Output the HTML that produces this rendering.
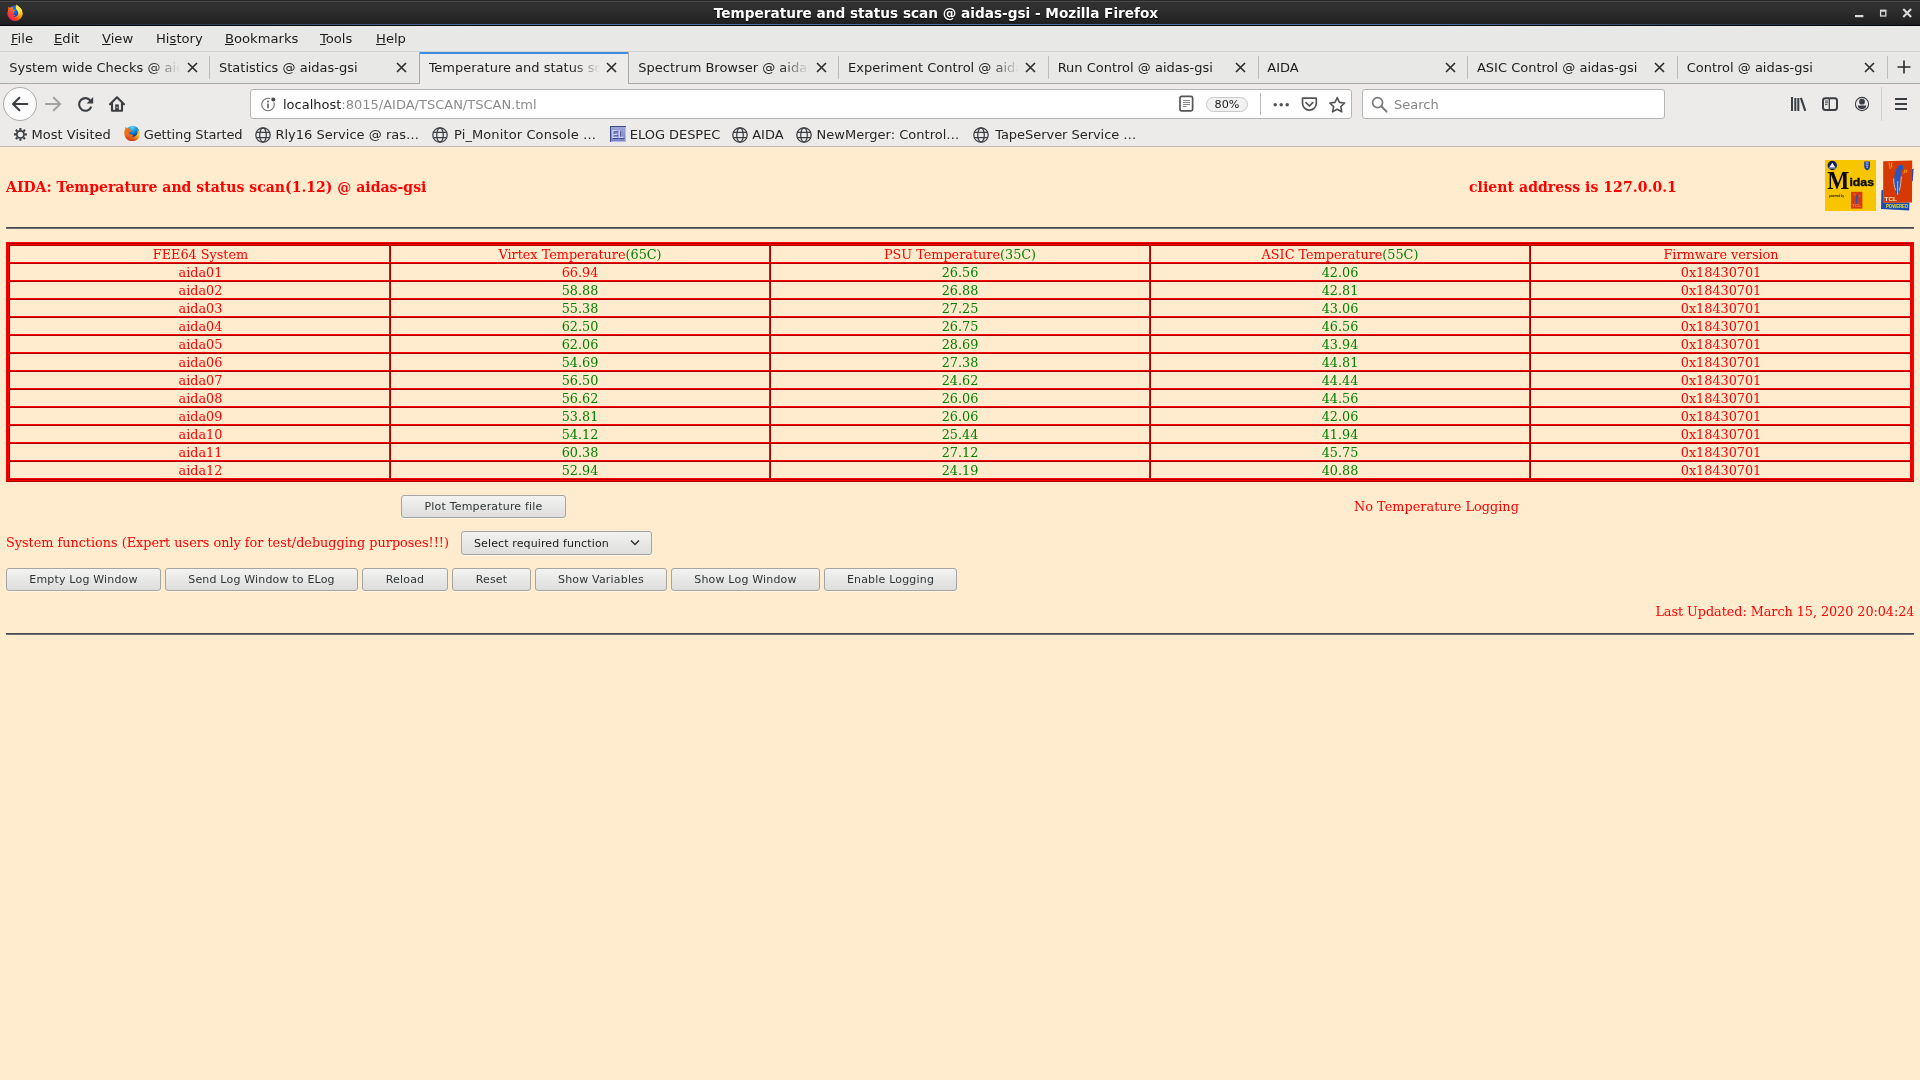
<!DOCTYPE html>
<html lang="en">
<head>
<meta charset="utf-8">
<title>Temperature and status scan @ aidas-gsi - Mozilla Firefox</title>
<style>
*{box-sizing:border-box;}
html,body{margin:0;padding:0;width:1920px;height:1080px;overflow:hidden;background:#ffebcd;}
body{font-family:"DejaVu Sans","Liberation Sans",sans-serif;font-size:13px;color:#1a1a1a;position:relative;}
.abs{position:absolute;}
#titlebar,#menubar,#tabs,#nav,#bm,#page{will-change:transform;}
/* ---------- window title bar ---------- */
#titlebar{left:0;top:0;width:1920px;height:26px;background:linear-gradient(#2a2a2a 0,#2a2a2a 1px,#474747 1px,#474747 2px,#313131 2px,#2d2d2d 12px,#1f1f1f 24px,#060606 25px,#060606 26px);color:#fff;}
#titlebar:after{content:"";position:absolute;left:0;top:24px;width:1920px;height:1px;background:linear-gradient(to right,rgba(70,106,156,0.1),rgba(80,118,170,0.95) 25%,rgba(80,118,170,0.95) 75%,rgba(70,106,156,0.1));}
#titlebar .ttl{left:0;top:0;width:1872px;height:26px;line-height:27px;text-align:center;font-weight:bold;font-size:13.64px;white-space:nowrap;text-shadow:0 1px 1px rgba(0,0,0,0.9);}
/* ---------- menu bar ---------- */
#menubar{left:0;top:26px;width:1920px;height:26px;background:#e8e8e7;border-bottom:1px solid #d2d2d1;}
#menubar span{position:absolute;top:0;line-height:26px;font-size:13.13px;color:#1c1c1c;white-space:nowrap;}
#menubar u{text-decoration:underline;text-underline-offset:1px;}
/* ---------- tabs ---------- */
#tabs{left:0;top:52px;width:1920px;height:32px;background:#e8e8e7;border-bottom:1px solid #a9a9a9;}
.tab{position:absolute;top:0;height:31px;width:210px;}
.tab .lbl{position:absolute;left:9.3px;top:0;width:172px;line-height:32px;font-size:13px;white-space:nowrap;overflow:hidden;color:#1c1c1c;}
.tab .fade{position:absolute;left:150px;top:3px;width:31px;height:24px;background:linear-gradient(to right,rgba(232,232,231,0),#e8e8e7);}
.tab.act .fade{background:linear-gradient(to right,rgba(236,235,234,0),#ecebea);}
.tab .lbl.ov{-webkit-mask-image:linear-gradient(to right,#000 143px,transparent 171px);mask-image:linear-gradient(to right,#000 143px,transparent 171px);}
.tab .sep{position:absolute;left:0;top:4px;width:1px;height:23px;background:#bdbdbc;}
.tab svg.x{position:absolute;left:187px;top:10px;}
.tab.act{background:#ecebea;border-left:1px solid #a9a9a9;border-right:1px solid #a9a9a9;height:32px;}
.tab.act svg.x{left:185.5px;}
.tab.act .fade{left:149px;}
.tab.act:before{content:"";position:absolute;left:0;right:0;top:0;height:2px;background:#3d8ee0;}
/* ---------- nav bar ---------- */
#nav{left:0;top:84px;width:1920px;height:40px;background:#ecebea;}
#urlbar{left:250px;top:5px;width:1102px;height:30px;background:#fff;border:1px solid #b5b5b4;border-radius:3px;}
#searchbar{left:1362px;top:5px;width:303px;height:30px;background:#fff;border:1px solid #b5b5b4;border-radius:3px;}
/* ---------- bookmarks ---------- */
#bm{left:0;top:124px;width:1920px;height:23px;background:#ecebea;border-bottom:1px solid #b8b8b7;}
#bm span.t{position:absolute;top:0;line-height:21px;font-size:13px;color:#262626;white-space:nowrap;}
/* ---------- page ---------- */
#page{left:0;top:147px;width:1920px;height:933px;background:#ffebcd;font-family:"DejaVu Serif","Liberation Serif",serif;font-size:12.8px;color:#ff0000;}

.h3{font-weight:bold;font-size:14px;line-height:18px;white-space:nowrap;}
.hr{left:6px;width:1908px;height:2px;border-top:1px solid #484a4e;border-bottom:1px solid #6a6e75;}
.g{color:#008000;}
.b1{border:1px solid #ff0000;border-bottom-color:#b20000;}
.b2{border:1px solid #b20000;border-right-color:#ff0000;border-bottom-color:#ff0000;height:100%;}
.b3{border:1px solid #ff0000;border-bottom-color:#b20000;border-right-color:#b20000;height:100%;}
table{border-collapse:separate;border-spacing:0;table-layout:fixed;width:1902px;font-size:12.8px;}
td{height:18px;border:1px solid;border-color:#b20000 #ff0000 #ff0000 #b20000;text-align:center;line-height:15px;padding:1px 0 0 0;vertical-align:top;white-space:nowrap;}
td:first-child{padding-left:2px;}
td:last-child{padding-left:1px;}
.btn{height:23px;border:1px solid #a5a5a3;border-radius:3px;background:linear-gradient(#f3f3f2,#dddddb);font-family:"DejaVu Sans","Liberation Sans",sans-serif;font-size:11px;letter-spacing:0.18px;line-height:21px;text-align:center;color:#2e3436;white-space:nowrap;box-shadow:0 1px 0 rgba(255,255,255,0.5);}
.sel{text-align:left;padding-left:12px;height:24px;line-height:23px;color:#1a1a1a;letter-spacing:0.12px;background:linear-gradient(#f2f2f1,#dededc);}
</style>
</head>
<body>
<div id="titlebar" class="abs"><div class="ttl abs">Temperature and status scan @ aidas-gsi - Mozilla Firefox</div>
<svg class="abs" style="left:6px;top:4px" width="18" height="18" viewBox="0 0 18 18"><defs><linearGradient id="q1" x1="0.85" y1="0.1" x2="0.15" y2="0.9"><stop offset="0" stop-color="#fff44f"/><stop offset="0.3" stop-color="#ffbd1a"/><stop offset="0.6" stop-color="#ff6a1a"/><stop offset="0.85" stop-color="#ff2a3a"/><stop offset="1" stop-color="#d4109a"/></linearGradient><linearGradient id="q3" x1="0.6" y1="0" x2="0.2" y2="1"><stop offset="0" stop-color="#ff8a1a"/><stop offset="0.55" stop-color="#ff4a2a"/><stop offset="1" stop-color="#f0207a"/></linearGradient><radialGradient id="q2" cx="0.55" cy="0.35" r="0.7"><stop offset="0" stop-color="#0a84ff"/><stop offset="0.7" stop-color="#0a50e0"/><stop offset="1" stop-color="#1a20a8"/></radialGradient></defs>
<circle cx="9" cy="9.4" r="7.7" fill="url(#q1)"/>
<path d="M4 3.6C5.6 2 8 1.6 10 2C9.6 3.4 9.8 4.6 10.6 5.6C11.8 7 12.8 8.4 12 10.4C11.2 12.4 8.6 13 6.6 12.6C8 12.4 9.2 11.8 9.6 10.8C8.4 11.2 7.2 11 6.4 10.2C7.2 10 7.8 9.4 8.2 8.8C8.6 8 8 7.2 7.2 7.2C7.8 6.6 8.6 6.4 9.2 6.6C8.6 5.8 7.6 5.6 6.8 5.8C6.6 5 6.8 4.2 7.2 3.6C6 3.6 5 4 4 3.6Z" fill="url(#q2)"/>
<path d="M10.4 0.4C12 1.6 15.4 4.2 16.4 7.6C15.6 6.6 14.8 6.2 14.2 6.2C14.6 8.2 14 10 12.4 11C13 9.4 12.6 7.6 11.4 6.4C10.2 5.2 9.6 3.6 10 2.2C10 1.6 10.2 1 10.4 0.4Z" fill="#ffe83e"/>
<path d="M2.4 2.6C3 3.4 3.8 3.8 4.8 3.8C5.6 3.6 6.4 3.4 7.2 3.6C6.8 4.4 6.6 5.2 6.8 5.8C7.6 5.6 8.6 5.8 9.2 6.6C8.4 6.6 7.6 6.8 7.2 7.4C7.8 7.4 8.4 8 8.2 8.8C7.6 9.6 6.4 10 5.4 9.6C5.8 10.6 6.8 11.4 8 11.4C6.6 12.2 4.6 11.8 3.6 10.4C2.4 8.8 2 6.6 2.2 4.8C2.2 4 2.2 3.2 2.4 2.6Z" fill="url(#q3)" opacity="0.95"/>
</svg>
<svg class="abs" style="left:1850px;top:6px" width="66" height="14" viewBox="0 0 66 14"><rect x="5" y="9" width="8.4" height="2.2" fill="#dadada"/><rect x="30.6" y="5" width="5.2" height="5" fill="none" stroke="#dadada" stroke-width="1.3"/><rect x="30" y="3.6" width="6.4" height="1.6" fill="#dadada"/><path d="M54 3.8L60.4 10.2M60.4 3.8L54 10.2" stroke="#dadada" stroke-width="2.1" stroke-linecap="square"/></svg>
</div>
<div id="menubar" class="abs">
<span style="left:11px"><u>F</u>ile</span>
<span style="left:54px"><u>E</u>dit</span>
<span style="left:102px"><u>V</u>iew</span>
<span style="left:156px">Hi<u>s</u>tory</span>
<span style="left:225px"><u>B</u>ookmarks</span>
<span style="left:320px"><u>T</u>ools</span>
<span style="left:376px"><u>H</u>elp</span>
</div>
<div id="tabs" class="abs">
<div class="tab" style="left:0px"><div class="lbl ov" style="left:9.30px">System wide Checks @ aidas-gsi</div><svg class="x" width="11" height="11" viewBox="0 0 11 11"><path d="M1 1 L10 10 M10 1 L1 10" stroke="#2b2b2b" stroke-width="1.6" fill="none"/></svg></div>
<div class="tab" style="left:209px"><div class="sep"></div><div class="lbl" style="left:9.97px">Statistics @ aidas-gsi</div><svg class="x" width="11" height="11" viewBox="0 0 11 11"><path d="M1 1 L10 10 M10 1 L1 10" stroke="#2b2b2b" stroke-width="1.6" fill="none"/></svg></div>
<div class="tab act" style="left:419px"><div class="lbl ov" style="left:8.63px">Temperature and status scan @ aidas-gsi</div><svg class="x" width="11" height="11" viewBox="0 0 11 11"><path d="M1 1 L10 10 M10 1 L1 10" stroke="#2b2b2b" stroke-width="1.6" fill="none"/></svg></div>
<div class="tab" style="left:629px"><div class="lbl ov" style="left:9.30px">Spectrum Browser @ aidas-gsi</div><svg class="x" width="11" height="11" viewBox="0 0 11 11"><path d="M1 1 L10 10 M10 1 L1 10" stroke="#2b2b2b" stroke-width="1.6" fill="none"/></svg></div>
<div class="tab" style="left:838px"><div class="sep"></div><div class="lbl ov" style="left:9.97px">Experiment Control @ aidas-gsi</div><svg class="x" width="11" height="11" viewBox="0 0 11 11"><path d="M1 1 L10 10 M10 1 L1 10" stroke="#2b2b2b" stroke-width="1.6" fill="none"/></svg></div>
<div class="tab" style="left:1048px"><div class="sep"></div><div class="lbl" style="left:9.63px">Run Control @ aidas-gsi</div><svg class="x" width="11" height="11" viewBox="0 0 11 11"><path d="M1 1 L10 10 M10 1 L1 10" stroke="#2b2b2b" stroke-width="1.6" fill="none"/></svg></div>
<div class="tab" style="left:1258px"><div class="sep"></div><div class="lbl" style="left:9.30px">AIDA</div><svg class="x" width="11" height="11" viewBox="0 0 11 11"><path d="M1 1 L10 10 M10 1 L1 10" stroke="#2b2b2b" stroke-width="1.6" fill="none"/></svg></div>
<div class="tab" style="left:1467px"><div class="sep"></div><div class="lbl" style="left:9.97px">ASIC Control @ aidas-gsi</div><svg class="x" width="11" height="11" viewBox="0 0 11 11"><path d="M1 1 L10 10 M10 1 L1 10" stroke="#2b2b2b" stroke-width="1.6" fill="none"/></svg></div>
<div class="tab" style="left:1677px"><div class="sep"></div><div class="lbl" style="left:9.63px">Control @ aidas-gsi</div><svg class="x" width="11" height="11" viewBox="0 0 11 11"><path d="M1 1 L10 10 M10 1 L1 10" stroke="#2b2b2b" stroke-width="1.6" fill="none"/></svg></div>
<div class="tab" style="left:1887px;width:33px"><div class="sep"></div><svg style="position:absolute;left:10px;top:8px" width="14" height="14" viewBox="0 0 14 14"><path d="M7 0.5V13.5M0.5 7H13.5" stroke="#2b2b2b" stroke-width="1.6" fill="none"/></svg></div>
</div>
<div id="nav" class="abs">
<div class="abs" style="left:3px;top:3px;width:34px;height:34px;border-radius:17px;background:#fcfcfc;border:1px solid #a9a9a8;"></div>
<svg class="abs" style="left:0;top:0" width="140" height="40" viewBox="0 0 140 40">
<g fill="none" stroke="#3b3f44" stroke-width="2.1" stroke-linecap="round" stroke-linejoin="round">
<path d="M27.3 20H13.2M19.4 13.8L13 20L19.4 26.2"/>
<path d="M45.9 20H60M53.8 13.8L60.2 20L53.8 26.2" stroke="#a3a3a3"/>
<path d="M90.6 16.9A6.3 6.3 0 1 0 91.3 22.6" stroke-linecap="butt"/>
<path d="M110 20.3L117 13.3L124 20.3M112 19.5V26.8H122V19.5"/>
</g>
<path d="M93.2 13V19.4H86.6Z" fill="#3b3f44"/>
<rect x="115.2" y="20.4" width="3.6" height="6" fill="#3b3f44"/>
<rect x="116.5" y="22.8" width="1" height="1.3" fill="#ececeb"/>
</svg>
<div id="urlbar" class="abs">
<svg class="abs" style="left:9px;top:4.5px" width="18" height="18" viewBox="0 0 18 18"><circle cx="8" cy="9.5" r="6.3" fill="none" stroke="#6d6d6d" stroke-width="1.1"/><circle cx="13.3" cy="4.3" r="3.1" fill="#fff"/><circle cx="13.3" cy="4.4" r="2" fill="#4a4a4a"/><rect x="7.2" y="8.6" width="1.6" height="4.6" fill="#5a5a5a"/><circle cx="8" cy="6.6" r="1" fill="#5a5a5a"/></svg>
<div class="abs" id="urltxt" style="left:32px;top:0;line-height:30px;font-size:13px;white-space:nowrap;color:#8c8c8c"><span style="color:#1a1a1a">localhost</span>:8015/AIDA/TSCAN/TSCAN.tml</div>
<svg class="abs" style="left:927px;top:5.3px" width="18" height="18" viewBox="0 0 18 18"><rect x="2" y="1.3" width="12.6" height="14.6" rx="1.6" fill="none" stroke="#555" stroke-width="1.7"/><path d="M5 5.5H12M5 7.5H12M5 9.5H12M5 11.5H8.5" stroke="#666" stroke-width="0.8"/></svg>
<div class="abs" style="left:955px;top:7px;width:42px;height:15px;border:1px solid #c9c9c9;border-radius:8px;background:#f1f1f1;font-size:11.2px;line-height:13px;text-align:center;color:#1a1a1a">80%</div>
<div class="abs" style="left:1009px;top:3px;width:1px;height:22px;background:#b9b9b9"></div>
<svg class="abs" style="left:1019px;top:4.5px" width="80" height="20" viewBox="0 0 80 20"><g fill="#555"><circle cx="5.2" cy="9.8" r="1.75"/><circle cx="11.2" cy="9.8" r="1.75"/><circle cx="17.2" cy="9.8" r="1.75"/></g>
<path d="M32.5 3.2H46.3V8.3A6.9 6.9 0 0 1 32.5 8.3Z" fill="none" stroke="#555" stroke-width="1.7" stroke-linejoin="round"/><path d="M36 7.6L39.4 11L42.8 7.6" fill="none" stroke="#555" stroke-width="1.7" stroke-linecap="round" stroke-linejoin="round"/>
<path d="M67.2 2.6L69.4 7.4L74.6 8L70.8 11.6L71.8 16.8L67.2 14.2L62.6 16.8L63.6 11.6L59.8 8L65 7.4Z" fill="none" stroke="#555" stroke-width="1.6" stroke-linejoin="round"/></svg>
</div>
<div id="searchbar" class="abs">
<svg class="abs" style="left:7px;top:5px" width="20" height="20" viewBox="0 0 20 20"><circle cx="7.6" cy="7.6" r="5" fill="none" stroke="#7b7b7b" stroke-width="1.7"/><path d="M11.3 11.3L16.6 16.6" stroke="#7b7b7b" stroke-width="2" stroke-linecap="round"/></svg>
<div class="abs" style="left:31px;top:0;line-height:30px;font-size:13px;color:#858585">Search</div>
</div>
<svg class="abs" style="left:1785px;top:8px" width="130" height="24" viewBox="0 0 130 24">
<g fill="#3b3f44"><rect x="6" y="5" width="2" height="14"/><rect x="9.3" y="6" width="2" height="13"/><rect x="12.3" y="6" width="2" height="13"/><path d="M14.9 6.3L16.9 5.6L21.3 18.6L19.3 19.3Z"/>
<circle cx="77" cy="9.7" r="2.9"/><path d="M72.8 13.6H81.2A4.2 3.6 0 0 1 72.8 13.6Z"/>
<rect x="110" y="6" width="12" height="2"/><rect x="110" y="11" width="12" height="2"/><rect x="110" y="16" width="12" height="2"/></g>
<rect x="38" y="6.2" width="14" height="11.8" rx="2.4" fill="none" stroke="#3b3f44" stroke-width="2"/><path d="M44.3 6.2V18" stroke="#3b3f44" stroke-width="1.3"/><path d="M40 9H43M40 10.8H43M40 12.6H42.4" stroke="#3b3f44" stroke-width="0.9"/>
<circle cx="77" cy="12" r="6.6" fill="none" stroke="#3b3f44" stroke-width="1.1"/>
</svg>
<div class="abs" style="left:1881px;top:3px;width:1px;height:34px;background:#cfcfce"></div>
</div>
<div id="bm" class="abs">
<svg class="abs" style="left:12.6px;top:2.6px" width="14.8" height="14.8" viewBox="0 0 16 16"><g stroke="#3b3f44" fill="none"><circle cx="8" cy="8" r="3.9" stroke-width="1.9"/><g stroke-width="2.3"><path d="M8 1V3.4M8 12.6V15M1 8H3.4M12.6 8H15M3.05 3.05L4.75 4.75M11.25 11.25L12.95 12.95M3.05 12.95L4.75 11.25M11.25 4.75L12.95 3.05"/></g></g></svg>
<span class="t" style="left:31.60px;letter-spacing:0.009px">Most Visited</span>
<svg class="abs" style="left:124px;top:0.9px" width="16.4" height="16.4" viewBox="0 0 16 16"><defs><radialGradient id="fb" cx="0.45" cy="0.1" r="0.95"><stop offset="0" stop-color="#6fd0f7"/><stop offset="0.35" stop-color="#12a0e2"/><stop offset="0.65" stop-color="#0b55b0"/><stop offset="0.9" stop-color="#08206a"/></radialGradient><linearGradient id="fg" x1="0" y1="0.2" x2="1" y2="0.6"><stop offset="0" stop-color="#f07a1c"/><stop offset="0.35" stop-color="#ea6a20"/><stop offset="0.7" stop-color="#f3921c"/><stop offset="0.88" stop-color="#ffd21e"/><stop offset="1" stop-color="#fff08a"/></linearGradient><linearGradient id="fs" x1="0" y1="0" x2="0" y2="1"><stop offset="0.55" stop-color="#c8200f" stop-opacity="0"/><stop offset="1" stop-color="#c01a10" stop-opacity="0.75"/></linearGradient></defs>
<circle cx="8.4" cy="7" r="6.3" fill="url(#fb)"/>
<path id="fxp" d="M1.4 1.6C2 2.6 2.8 3.2 3.6 3.4C4.4 2.8 5.4 2.6 6.2 2.8C5.8 3.4 5.8 4.2 6.2 4.8C6.8 4.9 7.4 5.1 7.8 5.4C7.2 5.6 6.8 6 6.6 6.5C6 6.7 5.2 7.2 4.6 7.8C5.2 8 5.6 8.4 5.8 8.9C6.6 9.6 7.8 9.8 9 9.4C8.8 10.2 8.2 10.9 7.4 11.3C9.2 12 11.4 11.2 12.4 9.6C13.4 8 13.4 5.8 12.6 4.2C13.8 4.8 14.6 5.8 15 6.8C15.2 5.8 15.1 5 14.8 4.2C16.2 6.2 16.4 9 15.2 11.4C13.8 14.4 10.6 16.2 7.2 15.8C3.8 15.4 1 12.8 0.4 9.4C0 7.2 0.4 5.2 1.2 3.6C1.2 3 1.2 2.2 1.4 1.6Z" fill="url(#fg)"/>
<path d="M1.4 1.6C2 2.6 2.8 3.2 3.6 3.4C4.4 2.8 5.4 2.6 6.2 2.8C5.8 3.4 5.8 4.2 6.2 4.8C6.8 4.9 7.4 5.1 7.8 5.4C7.2 5.6 6.8 6 6.6 6.5C6 6.7 5.2 7.2 4.6 7.8C5.2 8 5.6 8.4 5.8 8.9C6.6 9.6 7.8 9.8 9 9.4C8.8 10.2 8.2 10.9 7.4 11.3C9.2 12 11.4 11.2 12.4 9.6C13.4 8 13.4 5.8 12.6 4.2C13.8 4.8 14.6 5.8 15 6.8C15.2 5.8 15.1 5 14.8 4.2C16.2 6.2 16.4 9 15.2 11.4C13.8 14.4 10.6 16.2 7.2 15.8C3.8 15.4 1 12.8 0.4 9.4C0 7.2 0.4 5.2 1.2 3.6C1.2 3 1.2 2.2 1.4 1.6Z" fill="url(#fs)"/>
</svg>
<span class="t" style="left:143.80px;letter-spacing:-0.123px">Getting Started</span>
<svg class="abs" style="left:254px;top:2px" width="18" height="18" viewBox="0 0 18 18"><g fill="none" stroke="#3b3f44" stroke-width="1.25"><circle cx="9" cy="9" r="7.2"/><ellipse cx="9" cy="9" rx="3.3" ry="7.2"/><path d="M2.4 6.4H15.6M2.4 11.6H15.6"/></g></svg>
<span class="t" style="left:275.40px;letter-spacing:0.014px">Rly16 Service @ ras…</span>
<svg class="abs" style="left:431px;top:2px" width="18" height="18" viewBox="0 0 18 18"><g fill="none" stroke="#3b3f44" stroke-width="1.25"><circle cx="9" cy="9" r="7.2"/><ellipse cx="9" cy="9" rx="3.3" ry="7.2"/><path d="M2.4 6.4H15.6M2.4 11.6H15.6"/></g></svg>
<span class="t" style="left:454.00px;letter-spacing:0.107px">Pi_Monitor Console …</span>
<svg class="abs" style="left:610px;top:2px" width="17" height="17" viewBox="0 0 17 17"><defs><linearGradient id="elg" x1="0" y1="0" x2="0" y2="1"><stop offset="0" stop-color="#a0a5dc"/><stop offset="1" stop-color="#7d84c0"/></linearGradient></defs><rect x="0" y="0" width="16" height="16" fill="url(#elg)"/><rect x="15" y="1" width="1" height="15" fill="#b4b8f0"/><rect x="1" y="15" width="15" height="1" fill="#aeb2ea"/><rect x="0" y="0" width="16" height="1" fill="#3e4a85"/><rect x="0" y="0" width="1" height="16" fill="#3e4a85"/><text transform="translate(2.3,12.6) scale(0.84,1)" font-family="'Liberation Sans','DejaVu Sans',sans-serif" font-weight="bold" font-size="11.5" fill="#3e4a85">EL</text><text transform="translate(1.6,12) scale(0.84,1)" font-family="'Liberation Sans','DejaVu Sans',sans-serif" font-weight="bold" font-size="11.5" fill="#cbcdff">EL</text></svg>
<span class="t" style="left:629.80px;letter-spacing:-0.045px">ELOG DESPEC</span>
<svg class="abs" style="left:731px;top:2px" width="18" height="18" viewBox="0 0 18 18"><g fill="none" stroke="#3b3f44" stroke-width="1.25"><circle cx="9" cy="9" r="7.2"/><ellipse cx="9" cy="9" rx="3.3" ry="7.2"/><path d="M2.4 6.4H15.6M2.4 11.6H15.6"/></g></svg>
<span class="t" style="left:752.2px;letter-spacing:0.026px">AIDA</span>
<svg class="abs" style="left:795px;top:2px" width="18" height="18" viewBox="0 0 18 18"><g fill="none" stroke="#3b3f44" stroke-width="1.25"><circle cx="9" cy="9" r="7.2"/><ellipse cx="9" cy="9" rx="3.3" ry="7.2"/><path d="M2.4 6.4H15.6M2.4 11.6H15.6"/></g></svg>
<span class="t" style="left:816.60px;letter-spacing:0.008px">NewMerger: Control…</span>
<svg class="abs" style="left:972px;top:2px" width="18" height="18" viewBox="0 0 18 18"><g fill="none" stroke="#3b3f44" stroke-width="1.25"><circle cx="9" cy="9" r="7.2"/><ellipse cx="9" cy="9" rx="3.3" ry="7.2"/><path d="M2.4 6.4H15.6M2.4 11.6H15.6"/></g></svg>
<span class="t" style="left:995.20px;letter-spacing:-0.043px">TapeServer Service …</span>
</div>
<div id="page" class="abs">
<div class="abs h3" style="left:6px;top:31px;letter-spacing:0.02px">AIDA: Temperature and status scan(1.12) @ aidas-gsi</div>
<div class="abs h3" style="left:1469px;top:31px;letter-spacing:0.06px">client address is 127.0.0.1</div>
<svg class="abs" id="midas" style="left:1825px;top:13px" width="51" height="51" viewBox="0 0 51 51">
<rect width="51" height="51" fill="#f7c600"/>
<circle cx="7.3" cy="5.5" r="4.7" fill="#14205a"/><path d="M4.2 7.6L7.3 2.8L10.4 7.6Z" fill="#f4f6fb"/><path d="M3.4 8.2H11.2" stroke="#9fb0d8" stroke-width="0.8"/>
<path d="M39.2 1.4H45V6.4C45 8.4 43.6 9.6 42.1 10.4C40.6 9.6 39.2 8.4 39.2 6.4Z" fill="#1d3f9e"/><path d="M40.6 3H43.6M40.8 5.2H43.4M41.2 7.2H43" stroke="#dfe6fa" stroke-width="0.9"/>
<text x="2.2" y="28.6" font-family="'Liberation Serif','DejaVu Serif',serif" font-weight="bold" font-size="25" fill="#0a0a0a" textLength="22" lengthAdjust="spacingAndGlyphs">M</text>
<text x="24.4" y="26" font-family="'Liberation Sans','DejaVu Sans',sans-serif" font-weight="bold" font-size="11" fill="#0a0a0a" stroke="#0a0a0a" stroke-width="0.35" textLength="24.6" lengthAdjust="spacingAndGlyphs">idas</text>
<text x="4" y="37" font-family="'Liberation Sans','DejaVu Sans',sans-serif" font-weight="bold" font-size="3.4" fill="#1a1400" textLength="15" lengthAdjust="spacingAndGlyphs">powered by</text>
<rect x="26" y="31.8" width="11.4" height="16.8" fill="#d63a12"/>
<path d="M32.6 34.2C33.8 34.6 33.6 36.4 32.8 38.4C32.2 40.4 32.4 42.6 31.6 44.4C30.6 42.6 30.4 40 30.8 38C31.2 36.2 31.6 34.8 32.6 34.2Z" fill="#2a56b8"/>
<path d="M29.2 33.4L30 35.6M34.6 35.4L34 37" stroke="#f6a800" stroke-width="0.7"/>
<text x="27" y="47" font-family="'Liberation Sans',sans-serif" font-weight="bold" font-size="2.6" fill="#f08a3a" textLength="9" lengthAdjust="spacingAndGlyphs">TCL</text>
</svg>
<svg class="abs" id="tcl" style="left:1880px;top:12px" width="36" height="54" viewBox="0 0 36 54">
<path d="M1.4 31.4L3.4 30.4V43.4H29.4L29.2 51.6L1 50Z" fill="#1b4db3"/>
<path d="M31.6 10.4L33.6 9.6L32.8 22L31.6 22.6Z" fill="#1b4db3"/>
<path d="M3.2 2.2L32.2 1.6L32 43.6L3.2 43.8Z" fill="#d63a02"/>
<path d="M20.8 5.4C23.6 5.6 23.4 8.6 22.4 11L20.4 11.6C21.6 13.6 20.6 18 20.4 22C20.2 26 19.8 30 18.8 33C18.4 35 18 36.6 17.4 38C16.6 34 15 31 14.4 26.6C13.8 21.6 14.2 15.6 16 11C17 8.4 18.6 6 20.8 5.4Z" fill="#2358c4"/>
<path d="M13.8 19.4C13.4 23.6 14.4 28 15.8 31.4M21.4 17.4C20.8 22 20.6 27 19.4 31.6M17.6 22V36" stroke="#f2e6d8" stroke-width="0.7" fill="none"/>
<path d="M9 3.6C9.6 5.6 10 7.6 10.2 9.8M11.8 3.4C11.6 5 11.4 6.6 11.6 8.4M25 10.6C24.6 12 24.2 13.2 23.8 14.4M27 10.8C26.6 12 26.2 13 25.8 14" stroke="#f6b800" stroke-width="0.9" fill="none"/>
<text x="4.6" y="42" font-family="'Liberation Sans','DejaVu Sans',sans-serif" font-weight="bold" font-size="5.2" fill="#fbeee0" textLength="12.4" lengthAdjust="spacingAndGlyphs">TCL</text>
<text x="6" y="49.3" font-family="'Liberation Sans','DejaVu Sans',sans-serif" font-weight="bold" font-size="5.2" fill="#f2e11c" textLength="22" lengthAdjust="spacingAndGlyphs">POWERED</text>
</svg>
<div class="abs hr" style="top:80px"></div>
<div class="abs b1" style="left:6px;top:95px;width:1908px;height:240px"><div class="b2"><div class="b3">
<table cellspacing="0" cellpadding="0">
<colgroup><col style="width:381px"><col style="width:380px"><col style="width:380px"><col style="width:380px"><col style="width:381px"></colgroup>
<tr><td>FEE64 System</td><td>Virtex Temperature<span class="g">(65C)</span></td><td>PSU Temperature<span class="g">(35C)</span></td><td>ASIC Temperature<span class="g">(55C)</span></td><td>Firmware version</td></tr>
<tr><td>aida01</td><td>66.94</td><td class="g">26.56</td><td class="g">42.06</td><td>0x18430701</td></tr>
<tr><td>aida02</td><td class="g">58.88</td><td class="g">26.88</td><td class="g">42.81</td><td>0x18430701</td></tr>
<tr><td>aida03</td><td class="g">55.38</td><td class="g">27.25</td><td class="g">43.06</td><td>0x18430701</td></tr>
<tr><td>aida04</td><td class="g">62.50</td><td class="g">26.75</td><td class="g">46.56</td><td>0x18430701</td></tr>
<tr><td>aida05</td><td class="g">62.06</td><td class="g">28.69</td><td class="g">43.94</td><td>0x18430701</td></tr>
<tr><td>aida06</td><td class="g">54.69</td><td class="g">27.38</td><td class="g">44.81</td><td>0x18430701</td></tr>
<tr><td>aida07</td><td class="g">56.50</td><td class="g">24.62</td><td class="g">44.44</td><td>0x18430701</td></tr>
<tr><td>aida08</td><td class="g">56.62</td><td class="g">26.06</td><td class="g">44.56</td><td>0x18430701</td></tr>
<tr><td>aida09</td><td class="g">53.81</td><td class="g">26.06</td><td class="g">42.06</td><td>0x18430701</td></tr>
<tr><td>aida10</td><td class="g">54.12</td><td class="g">25.44</td><td class="g">41.94</td><td>0x18430701</td></tr>
<tr><td>aida11</td><td class="g">60.38</td><td class="g">27.12</td><td class="g">45.75</td><td>0x18430701</td></tr>
<tr><td>aida12</td><td class="g">52.94</td><td class="g">24.19</td><td class="g">40.88</td><td>0x18430701</td></tr>
</table></div></div></div>
<div class="abs btn" style="left:401px;top:348px;width:165px"><span>Plot Temperature file</span></div>
<div class="abs" style="left:1354px;top:352px;line-height:16px;white-space:nowrap;letter-spacing:0.04px">No Temperature Logging</div>
<div class="abs" style="left:6px;top:388px;line-height:16px;white-space:nowrap">System functions (Expert users only for test/debugging purposes!!!)</div>
<div class="abs btn sel" style="left:461px;top:384px;width:191px"><span>Select required function</span><svg class="abs" style="left:168px;top:7px" width="10" height="8" viewBox="0 0 10 8"><path d="M1 1.5L5 5.5L9 1.5" fill="none" stroke="#2e3436" stroke-width="1.5"/></svg></div>
<div class="abs btn" style="left:6px;top:421px;width:155px"><span>Empty Log Window</span></div>
<div class="abs btn" style="left:165px;top:421px;width:193px"><span>Send Log Window to ELog</span></div>
<div class="abs btn" style="left:362px;top:421px;width:86px"><span>Reload</span></div>
<div class="abs btn" style="left:452px;top:421px;width:79px"><span>Reset</span></div>
<div class="abs btn" style="left:535px;top:421px;width:132px"><span>Show Variables</span></div>
<div class="abs btn" style="left:671px;top:421px;width:149px"><span>Show Log Window</span></div>
<div class="abs btn" style="left:824px;top:421px;width:133px"><span>Enable Logging</span></div>
<div class="abs" style="right:5.6px;top:457px;line-height:16px;white-space:nowrap;letter-spacing:-0.05px">Last Updated: March 15, 2020 20:04:24</div>
<div class="abs hr" style="top:486px"></div>
</div>
</body>
</html>
